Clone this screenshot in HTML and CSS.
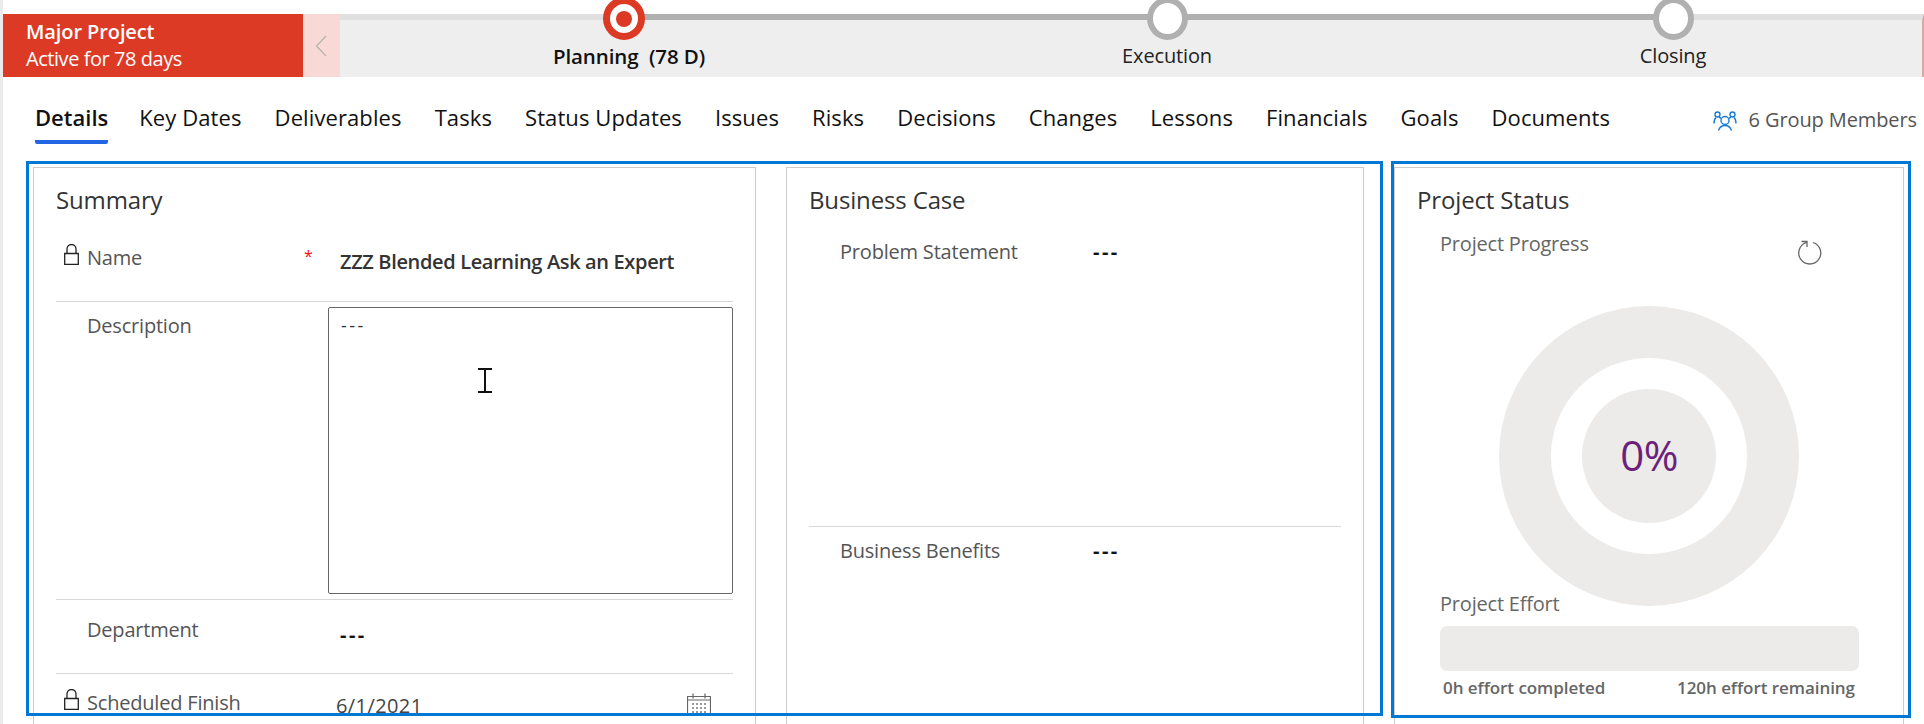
FILE: index.html
```html
<!DOCTYPE html>
<html lang="en">
<head>
<meta charset="utf-8">
<title>Major Project</title>
<link rel="stylesheet" href="styles.css">
</head>
<body>
<div class="page">
  <header class="bpf">
    <div class="bpf-flag">
      <div class="flag-title">Major Project</div>
      <div class="flag-sub">Active for 78 days</div>
    </div>
    <div class="bpf-back">
      <svg width="12" height="22" viewBox="0 0 12 22"><path d="M11 1 1.5 11 11 21" fill="none" stroke="#b8b4b2" stroke-width="1.3"/></svg>
    </div>
    <div class="bpf-stages">
      <div class="track"></div>
      <div class="stage">
        <span class="ring ring-active"><span class="dot"></span></span>
        <span class="stage-label stage-label-active">Planning&nbsp; (78 D)</span>
      </div>
      <div class="stage">
        <span class="ring"></span>
        <span class="stage-label">Execution</span>
      </div>
      <div class="stage">
        <span class="ring"></span>
        <span class="stage-label">Closing</span>
      </div>
    </div>
  </header>

  <nav class="tabs">
    <a class="tab tab-active">Details</a>
    <a class="tab">Key Dates</a>
    <a class="tab">Deliverables</a>
    <a class="tab">Tasks</a>
    <a class="tab">Status Updates</a>
    <a class="tab">Issues</a>
    <a class="tab">Risks</a>
    <a class="tab">Decisions</a>
    <a class="tab">Changes</a>
    <a class="tab">Lessons</a>
    <a class="tab">Financials</a>
    <a class="tab">Goals</a>
    <a class="tab">Documents</a>
    <div class="members">
      <svg width="25" height="22" viewBox="0 0 25 22" fill="none" stroke="#1a7bd6" stroke-width="1.4">
        <circle cx="4.500" cy="5.500" r="2.500"/><circle cx="19.500" cy="5.500" r="2.500"/><circle cx="12" cy="11.500" r="4"/>
        <path d="M5.500 21.500c1-3 3.500-5 6.500-5s5.500 2 6.500 5M1 14.500c0-3 .8-5 2-6M8 9.500C7.500 9 7 8.500 6 8.300M23 14.500c0-3-.8-5-2-6M16 9.500c.5-.5 1-1 2-1.200"/>
      </svg>
      <span>6 Group Members</span>
    </div>
  </nav>

  <main class="cards">
    <section class="card card-summary">
      <h2 class="card-title">Summary</h2>
      <div class="form">
        <div class="row row-name">
          <svg class="lock" width="15" height="21" viewBox="0 0 15 21"><path d="M3 9.500V5a4.500 4.500 0 0 1 9 0v4.500M.7 9.500h13.600v10.800H.7z" fill="none" stroke="#222" stroke-width="1.300"/></svg>
          <span class="label">Name</span>
          <span class="req">*</span>
          <span class="value value-name">ZZZ Blended Learning Ask an Expert</span>
        </div>
        <div class="row row-desc">
          <span class="label label-plain">Description</span>
          <div class="textbox">---
            <svg class="ibeam" width="14" height="25" viewBox="0 0 14 25"><path d="M0 1h14M0 24h14M7 1v23" fill="none" stroke="#111" stroke-width="2"/></svg>
          </div>
        </div>
        <div class="row row-dept">
          <span class="label label-plain">Department</span>
          <span class="value value-dash">---</span>
        </div>
        <div class="row row-finish">
          <svg class="lock" width="15" height="21" viewBox="0 0 15 21"><path d="M3 9.500V5a4.500 4.500 0 0 1 9 0v4.500M.7 9.500h13.600v10.800H.7z" fill="none" stroke="#222" stroke-width="1.300"/></svg>
          <span class="label">Scheduled Finish</span>
          <span class="value value-date">6/1/2021</span>
          <svg class="cal" width="24" height="23" viewBox="0 0 24 23" fill="none" stroke="#666">
            <path d="M.5 3.500h23v20H.5zM.5 7h23M6 .500v5M18 .500v5" stroke-width="1.200"/>
            <path d="M5 11h14M5 15h14M5 19h14" stroke-dasharray="2 2" stroke-width="2" stroke="#999"/>
          </svg>
        </div>
      </div>
    </section>

    <section class="card card-case">
      <h2 class="card-title">Business Case</h2>
      <div class="case-row case-problem">
        <span class="case-label">Problem Statement</span>
        <span class="value-dash">---</span>
      </div>
      <div class="case-row case-benefits">
        <span class="case-label">Business Benefits</span>
        <span class="value-dash">---</span>
      </div>
    </section>

    <section class="card card-status">
      <h2 class="card-title">Project Status</h2>
      <div class="progress-head">
        <span class="sub-title">Project Progress</span>
        <svg width="24" height="25" viewBox="0 0 24 25" fill="none" stroke="#666" stroke-width="1.300">
          <path d="M8.500 2.500A11 11 0 1 0 15 2.500M3.500 1.500h5.500v5.500"/>
        </svg>
      </div>
      <div class="donut">
        <div class="donut-hole">
          <div class="donut-core">0%</div>
        </div>
      </div>
      <div class="sub-title effort-title">Project Effort</div>
      <div class="effort-bar"></div>
      <div class="effort-caption">
        <span>0h effort completed</span>
        <span>120h effort remaining</span>
      </div>
    </section>
  </main>

  <div class="focus focus-main"></div>
  <div class="focus focus-status"></div>
</div>
</body>
</html>
```

FILE: styles.css
```css
* { box-sizing: border-box; }
html, body { margin: 0; padding: 0; background: #fff; }
body { font-family: "Open Sans", "Noto Sans", sans-serif; color: #111; }
.page { position: relative; width: 1924px; height: 724px; overflow: hidden; padding-top: 14px; border-left: 3px solid #ebebeb; }

.bpf { display: flex; height: 63px; }
.bpf-flag { width: 300px; background: #dc3a24; color: #fff; padding: 6px 0 0 23px; }
.flag-title { font-size: 20px; font-weight: 600; line-height: 24px; letter-spacing: -0.1px; }
.flag-sub { font-size: 20px; line-height: 26px; margin-top: 2px; letter-spacing: -0.45px; }
.bpf-back { width: 37px; background: #f8d9d5; display: flex; align-items: center; padding-left: 12px; }
.bpf-stages { position: relative; flex: 1; display: grid; grid-template-columns: 568px 518px 494px; background: #eee; border-top: 6px solid #e0e0e0; border-right: 2px solid #d9a89f; }
.track { position: absolute; left: 284px; width: 1049px; top: -6px; height: 6px; background: #b0b0b0; }
.stage { position: relative; display: flex; flex-direction: column; align-items: center; margin-top: -23px; }
.ring { width: 41px; height: 43px; border-radius: 50%; border: 6px solid #b0b0b0; background: #fff; display: flex; align-items: center; justify-content: center; }
.ring-active { border: 7px solid #dc3a24; width: 42px; }
.dot { width: 16px; height: 16px; border-radius: 50%; background: #dc3a24; }
.stage-label { font-size: 20px; line-height: 24px; margin-top: 4px; letter-spacing: -0.15px; color: #222; white-space: nowrap; }
.stage-label-active { font-size: 20.5px; font-weight: 600; padding-left: 10px; color: #111; letter-spacing: -0.1px; }

.tabs { display: flex; align-items: flex-start; gap: 33px; padding: 25px 0 0 32px; height: 90px; position: relative; }
.tab { font-size: 22px; line-height: 30px; height: 42px; letter-spacing: 0.1px; color: #111; white-space: nowrap; }
.tab-active { font-weight: 600; letter-spacing: 0; margin-right: -2px; border-bottom: 4px solid #2266e3; border-radius: 0 0 2px 2px; }
.members { position: absolute; right: 7px; top: 29px; display: flex; align-items: center; gap: 11px; font-size: 20px; line-height: 28px; color: #555; letter-spacing: -0.1px; }

.cards { display: flex; align-items: stretch; gap: 30px; padding-left: 30px; height: 557px; }
.card { border: 1px solid #ccc; border-bottom: 0; height: 100%; flex: none; position: relative; }
.card-summary { width: 723px; padding: 0 22px; }
.card-case { width: 578px; padding: 0 22px; }
.card-status { width: 510px; padding: 0 22px; }
.card-title { margin: 0; font-size: 24px; font-weight: 400; line-height: 30px; padding-top: 17px; height: 46px; color: #333; letter-spacing: -0.15px; }

.form { height: 502px; }
.row { position: relative; display: flex; border-bottom: 1px solid #d8d8d8; }
.label { font-size: 20px; line-height: 24px; color: #555; letter-spacing: -0.2px; white-space: nowrap; }
.label-plain { padding-left: 31px; width: 272px; flex: none; padding-top: 7px; }
.lock { flex: none; margin: 0 8px 0 8px; }
.row-name { height: 88px; padding-top: 30px; }
.row-name .label { padding-top: 2px; width: 217px; }
.req { color: #e81123; font-size: 16px; width: 36px; flex: none; padding-top: 1px; }
.value { font-size: 20px; line-height: 24px; color: #111; }
.value-name { font-weight: 600; color: #333; padding-top: 6px; letter-spacing: -0.35px; white-space: nowrap; }
.row-desc { height: 298px; padding-top: 5px; }
.textbox { position: relative; flex: 1; height: 287px; border: 1px solid #666; border-radius: 2px; padding: 6px 12px; font-size: 18px; line-height: 22px; letter-spacing: 2.5px; color: #333; }
.ibeam { position: absolute; left: 149px; top: 60px; }
.row-dept { height: 74px; padding-top: 11px; }
.row-dept .label-plain { width: 284px; }
.value-dash { font-size: 20px; font-weight: 700; line-height: 24px; color: #111; letter-spacing: 2.5px; }
.row-dept .value-dash { padding-top: 12px; }
.row-finish { height: 42px; padding-top: 15px; border-bottom: 0; }
.row-finish .label { padding-top: 2px; width: 249px; flex: none; }
.value-date { font-size: 20px; line-height: 18px; padding-top: 8px; color: #444; letter-spacing: 0.4px; }
.cal { position: absolute; left: 631px; top: 19px; }

.case-row { display: flex; padding-left: 31px; }
.case-label { width: 253px; flex: none; font-size: 20px; line-height: 24px; color: #555; letter-spacing: -0.2px; white-space: nowrap; }
.case-problem { height: 313px; padding-top: 26px; border-bottom: 1px solid #d8d8d8; }
.case-benefits { padding-top: 12px; }

.progress-head { display: flex; justify-content: space-between; padding: 0 59px 0 23px; margin-top: 18px; height: 48px; }
.sub-title { font-size: 20px; line-height: 24px; color: #666; letter-spacing: -0.2px; }
.progress-head svg { margin-top: 8px; }
.donut { width: 300px; height: 300px; margin: 26px 0 0 82px; border-radius: 50%; background: #ecebe9; display: flex; align-items: center; justify-content: center; }
.donut-hole { width: 196px; height: 196px; border-radius: 50%; background: #fff; display: flex; align-items: center; justify-content: center; }
.donut-core { width: 134px; height: 134px; border-radius: 50%; background: #ecebe9; display: flex; align-items: center; justify-content: center; padding-bottom: 4px; font-size: 42px; font-weight: 500; color: #6b1f7a; letter-spacing: -0.5px; }
.effort-title { margin: -14px 0 0 23px; height: 34px; position: relative; }
.effort-bar { width: 419px; height: 45px; margin-left: 23px; border-radius: 7px; background: #ecebe9; }
.effort-caption { display: flex; justify-content: space-between; width: 412px; margin: 6px 0 0 26px; font-size: 17px; line-height: 22px; font-weight: 600; color: #666; letter-spacing: -0.05px; white-space: nowrap; }

.focus { position: absolute; border: 3px solid #0078d4; pointer-events: none; }
.focus-main { left: 23px; top: 161px; width: 1357px; height: 555px; }
.focus-status { left: 1388px; top: 161px; width: 520px; height: 557px; }
```
